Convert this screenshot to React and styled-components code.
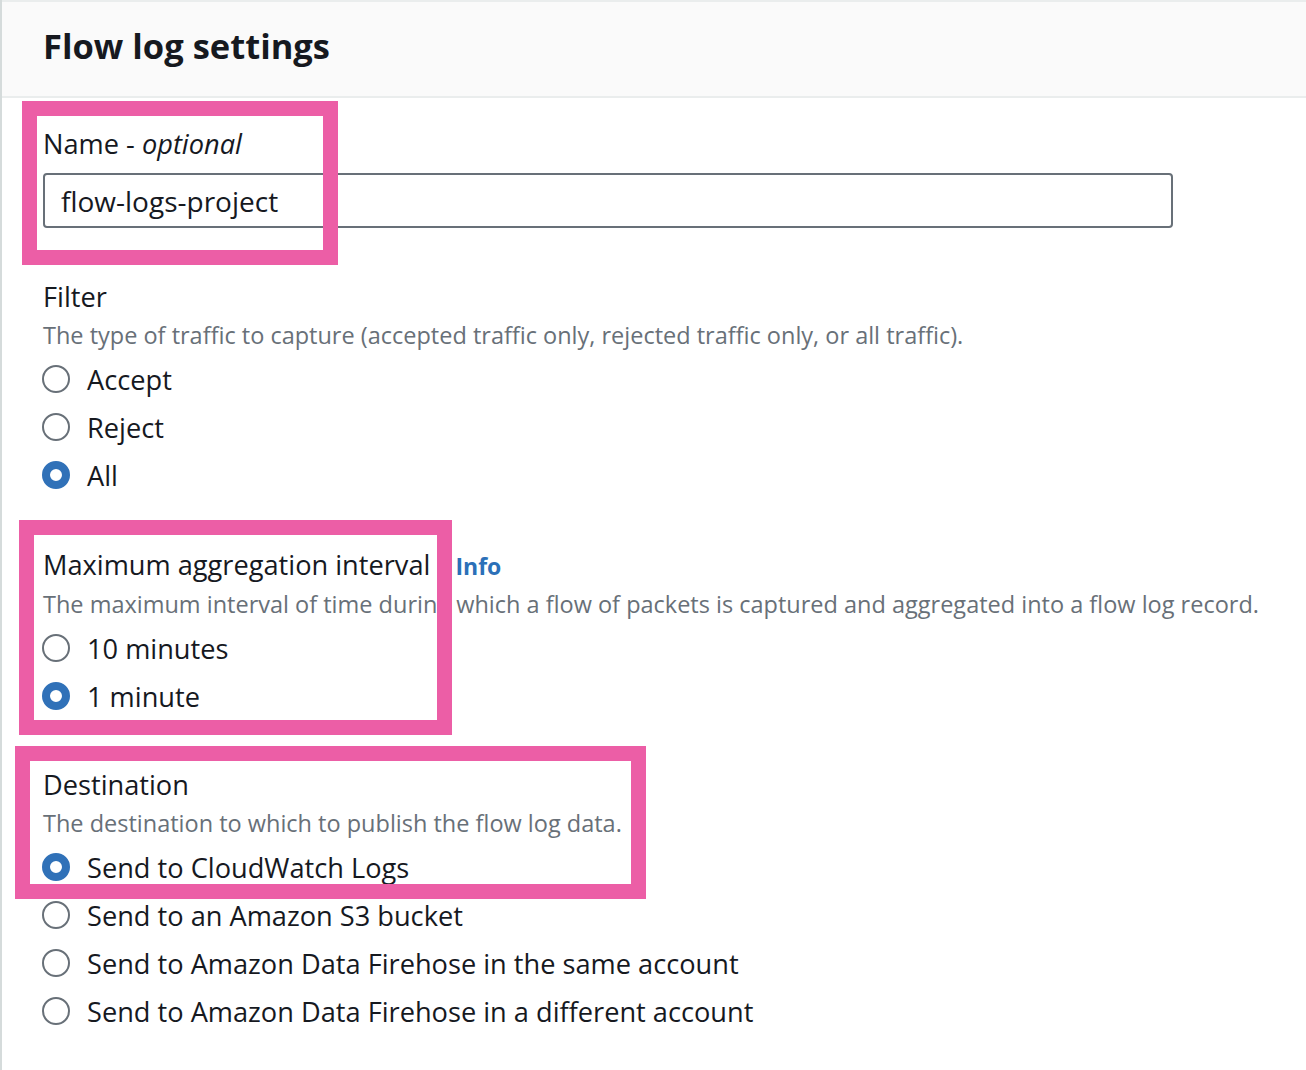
import React from 'react'
import styled, { createGlobalStyle } from 'styled-components'

const GlobalStyle = createGlobalStyle`
  html, body {
    margin: 0;
    padding: 0;
    background: #ffffff;
  }
  body {
    font-family: "Open Sans", "Noto Sans", "Liberation Sans", sans-serif;
    color: #16191f;
  }
`;

const Panel = styled.div`
  position: relative;
  min-height: 1070px;
  box-sizing: border-box;
  border-left: 2px solid #d5dbdb;
`;

const Header = styled.div`
  height: 94px;
  border-top: 2px solid #eaeded;
  border-bottom: 2px solid #eaeded;
  background: #fafafa;
  padding-left: 41px;
  display: flex;
  align-items: center;
`;

const Title = styled.h2`
  margin: 0 0 8px;
  font-size: 34.5px;
  font-weight: 700;
  color: #16191f;
`;

const Body = styled.div`
  padding: 28px 0 0 41px;
  display: flex;
  flex-direction: column;
`;

const Field = styled.div`
  display: flex;
  flex-direction: column;
  margin-top: ${p => p.$gap || 0}px;
`;

const Label = styled.div`
  font-size: 27.2px;
  line-height: 36px;
  color: #16191f;
  display: flex;
  align-items: baseline;
  gap: 25px;

  em {
    font-style: italic;
  }
`;

const InfoLink = styled.a`
  font-size: 23px;
  font-weight: 700;
  color: #2b70b8;
  text-decoration: none;
`;

const Description = styled.div`
  margin-top: 2px;
  font-size: 23.5px;
  line-height: 36px;
  color: #687078;
`;

const TextInput = styled.input`
  margin-top: 11px;
  width: 1130px;
  height: 55px;
  box-sizing: border-box;
  border: 2px solid #687078;
  border-radius: 4px;
  padding: 0 16px;
  font-family: inherit;
  font-size: 28px;
  color: #16191f;
  background: #fff;
  outline: none;
`;

const RadioGroup = styled.div`
  margin-top: 2px;
  display: flex;
  flex-direction: column;
`;

const RadioRow = styled.label`
  height: 48px;
  display: flex;
  align-items: center;
  gap: 17px;
  margin-left: -1px;
  font-size: 27.2px;
  color: #16191f;
`;

const RadioDot = styled.span`
  width: 28px;
  height: 28px;
  box-sizing: border-box;
  border-radius: 50%;
  flex: none;
  border: ${p => (p.$checked ? '8px solid #3071b8' : '2px solid #687078')};
  background: #fff;
`;

const Marker = styled.div`
  position: absolute;
  box-sizing: border-box;
  border: 15px solid #ec5ea6;
  pointer-events: none;
`;

const Radio = ({ checked, children }) => (
  <RadioRow>
    <RadioDot $checked={checked} />
    <span>{children}</span>
  </RadioRow>
);

export default function App() {
  return (
    <>
      <GlobalStyle />
      <Panel>
        <Header>
          <Title>Flow log settings</Title>
        </Header>

        <Body>
          <Field>
            <Label>
              <span>Name - <em>optional</em></span>
            </Label>
            <TextInput defaultValue="flow-logs-project" />
          </Field>

          <Field $gap={51}>
            <Label>Filter</Label>
            <Description>
              The type of traffic to capture (accepted traffic only, rejected traffic only, or all traffic).
            </Description>
            <RadioGroup>
              <Radio>Accept</Radio>
              <Radio>Reject</Radio>
              <Radio checked>All</Radio>
            </RadioGroup>
          </Field>

          <Field $gap={48}>
            <Label>
              <span>Maximum aggregation interval</span>
              <InfoLink href="#">Info</InfoLink>
            </Label>
            <Description>
              The maximum interval of time during which a flow of packets is captured and aggregated into a flow log record.
            </Description>
            <RadioGroup>
              <Radio>10 minutes</Radio>
              <Radio checked>1 minute</Radio>
            </RadioGroup>
          </Field>

          <Field $gap={47}>
            <Label>Destination</Label>
            <Description>The destination to which to publish the flow log data.</Description>
            <RadioGroup>
              <Radio checked>Send to CloudWatch Logs</Radio>
              <Radio>Send to an Amazon S3 bucket</Radio>
              <Radio>Send to Amazon Data Firehose in the same account</Radio>
              <Radio>Send to Amazon Data Firehose in a different account</Radio>
            </RadioGroup>
          </Field>
        </Body>

        <Marker style={{ left: 20, top: 101, width: 316, height: 164 }} />
        <Marker style={{ left: 17, top: 520, width: 433, height: 215 }} />
        <Marker style={{ left: 13, top: 746, width: 631, height: 153 }} />
      </Panel>
    </>
  )
}
